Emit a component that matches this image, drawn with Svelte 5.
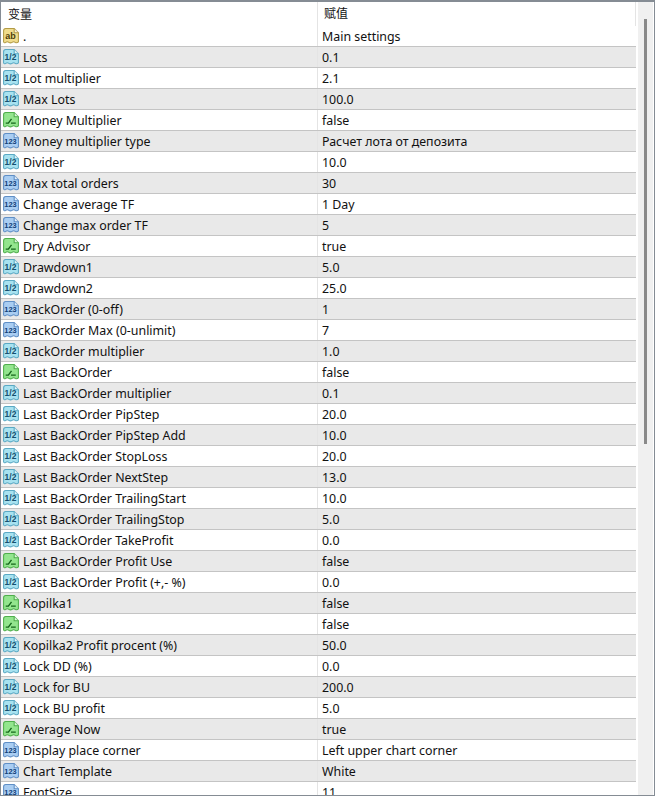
<script>
	const rows = [
		['ab', '.', 'Main settings'],
		['half', 'Lots', '0.1'],
		['half', 'Lot multiplier', '2.1'],
		['half', 'Max Lots', '100.0'],
		['bool', 'Money Multiplier', 'false'],
		['int', 'Money multiplier type', 'Расчет лота от депозита'],
		['half', 'Divider', '10.0'],
		['int', 'Max total orders', '30'],
		['int', 'Change average TF', '1 Day'],
		['int', 'Change max order TF', '5'],
		['bool', 'Dry Advisor', 'true'],
		['half', 'Drawdown1', '5.0'],
		['half', 'Drawdown2', '25.0'],
		['int', 'BackOrder (0-off)', '1'],
		['int', 'BackOrder Max (0-unlimit)', '7'],
		['half', 'BackOrder multiplier', '1.0'],
		['bool', 'Last BackOrder', 'false'],
		['half', 'Last BackOrder multiplier', '0.1'],
		['half', 'Last BackOrder PipStep', '20.0'],
		['half', 'Last BackOrder PipStep Add', '10.0'],
		['half', 'Last BackOrder StopLoss', '20.0'],
		['half', 'Last BackOrder NextStep', '13.0'],
		['half', 'Last BackOrder TrailingStart', '10.0'],
		['half', 'Last BackOrder TrailingStop', '5.0'],
		['half', 'Last BackOrder TakeProfit', '0.0'],
		['bool', 'Last BackOrder Profit Use', 'false'],
		['half', 'Last BackOrder Profit (+,- %)', '0.0'],
		['bool', 'Kopilka1', 'false'],
		['bool', 'Kopilka2', 'false'],
		['half', 'Kopilka2 Profit procent (%)', '50.0'],
		['half', 'Lock DD (%)', '0.0'],
		['half', 'Lock for BU', '200.0'],
		['half', 'Lock BU profit', '5.0'],
		['bool', 'Average Now', 'true'],
		['int', 'Display place corner', 'Left upper chart corner'],
		['int', 'Chart Template', 'White'],
		['int', 'FontSize', '11']
	];

	const kinds = {
		ab: { fill: '#f0dc8c', edge: '#b39b45', text: 'ab', color: '#4a3c08' },
		half: { fill: '#a8e2f0', edge: '#5aa9c4', text: '1/2', color: '#14506e' },
		int: { fill: '#a9cdf2', edge: '#5f8fc6', text: '123', color: '#123f78' },
		bool: { fill: '#93e58e', edge: '#4fae4c' }
	};
</script>

<div class="window">
	<div class="table">
		<div class="head">
			<div class="name">变量</div>
			<div class="value">赋值</div>
		</div>
		{#each rows as [kind, name, value], i}
			{@const k = kinds[kind]}
			<div class="row" class:odd={i % 2 === 1}>
				<div class="name">
					<svg class="icon" width="18" height="18" viewBox="0 0 17 17">
						<path
							d="M1.5 3.5 Q1.5 1.5 3.5 1.5 H11.5 L15.5 5.5 V14 Q14 15.5 12.5 14.5 Q11 13.5 9.5 14.5 Q8 15.5 6.5 14.5 Q5 13.5 3.5 14.5 Q2 15.5 1.5 14 Z"
							fill={k.fill}
							stroke={k.edge}
						/>
						<path d="M11.5 1.5 V5.5 H15.5" fill="#fff" fill-opacity="0.7" stroke={k.edge} />
						{#if kind === 'bool'}
							<path d="M3.5 11.5 H6 L9 7.5 M8.5 11.5 H13" fill="none" stroke="#14651a" stroke-width="1.3" />
						{:else}
							<text class="glyph {kind}" x="8" y="11.5" fill={k.color}>{k.text}</text>
						{/if}
					</svg>
					<span class="label">{name}</span>
				</div>
				<div class="value">{value}</div>
			</div>
		{/each}
	</div>
	<div class="track"><div class="thumb"></div></div>
</div>

<style>
	:global(body) {
		margin: 0;
		background: #fff;
	}

	.window {
		box-sizing: border-box;
		width: 655px;
		height: 796px;
		display: flex;
		overflow: hidden;
		border: 2px solid #858c94;
		border-width: 2px 1px 1px 1px;
		font-family: 'Noto Sans', 'Noto Sans CJK SC', sans-serif;
		font-size: 12.4px;
		color: #111;
	}

	.table {
		width: 635px;
		flex: none;
		overflow: hidden;
	}

	.head {
		display: flex;
		height: 24px;
		line-height: 23px;
		font-size: 12px;
		border-right: 1px solid #e4e4e4;
	}

	.head .name {
		padding-left: 7px;
	}

	.row {
		display: flex;
		height: 20px;
		line-height: 22px;
		border-bottom: 1px solid #c4c4c4;
		background: #fff;
	}

	.row.odd {
		background: #e9e9e9;
	}

	.name {
		box-sizing: border-box;
		width: 317px;
		flex: none;
		display: flex;
		align-items: center;
		border-right: 1px solid #e4e4e4;
		white-space: nowrap;
	}

	.row .name {
		padding-left: 1px;
		gap: 3px;
	}

	.label {
		padding-top: 2px;
	}

	.value {
		flex: 1;
		padding-left: 4px;
		white-space: nowrap;
	}

	.head .value {
		padding-left: 6px;
	}

	.icon {
		flex: none;
	}

	.glyph {
		font-family: 'Liberation Sans', sans-serif;
		font-size: 8.5px;
		font-weight: 700;
		text-anchor: middle;
	}

	.glyph.half {
		font-size: 8px;
	}

	.glyph.int {
		font-size: 7px;
	}

	.track {
		width: 15px;
		margin-left: 2px;
		flex: none;
		background: #f0f0f0;
		display: flex;
		justify-content: center;
	}

	.thumb {
		width: 3px;
		height: 425px;
		margin-top: 17px;
		background: #8a8a8a;
	}
</style>
